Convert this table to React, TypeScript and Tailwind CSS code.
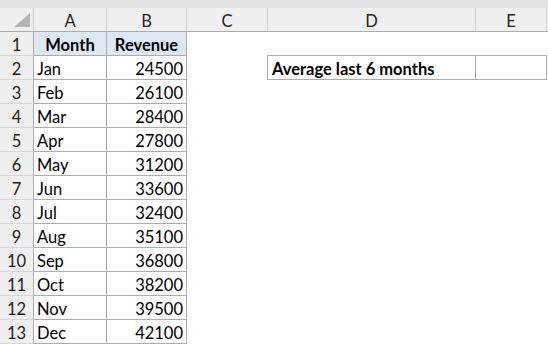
import type { ReactNode } from "react";

const data: [string, number][] = [
  ["Jan", 24500],
  ["Feb", 26100],
  ["Mar", 28400],
  ["Apr", 27800],
  ["May", 31200],
  ["Jun", 33600],
  ["Jul", 32400],
  ["Aug", 35100],
  ["Sep", 36800],
  ["Oct", 38200],
  ["Nov", 39500],
  ["Dec", 42100],
];

function RowNum({ n }: { n: number }) {
  return (
    <div className="w-[34px] h-full shrink-0 flex items-end justify-center bg-[#efefef] border-r border-b border-r-[#ababab] border-b-[#d6d6d6] text-[#222] leading-[20px]">
      {n}
    </div>
  );
}

function Cell({ w, className = "", children }: { w: string; className?: string; children?: ReactNode }) {
  return <div className={`${w} h-full flex items-end leading-[20px] shrink-0 ${className}`}>{children}</div>;
}

export default function App() {
  const heads = [
    ["A", "w-[73px]"],
    ["B", "w-[80px]"],
    ["C", "w-[81px]"],
    ["D", "w-[208px]"],
    ["E", "w-[71px]"],
  ];

  return (
    <div className="w-[548px] h-[345px] overflow-hidden bg-white text-[16.5px] text-black" style={{ fontFamily: "Lato, 'Open Sans', sans-serif" }}>
      <div className="h-[8px] bg-[#e3e3e3]" />

      {/* column headers */}
      <div className="flex h-[24px] bg-[#efefef] border-b border-[#ababab]">
        <div className="w-[34px] h-full border-r border-[#cfcfcf] relative shrink-0">
          <svg className="absolute left-[14px] top-[5px]" width="16" height="14" viewBox="0 0 16 14">
            <polygon points="16,0 16,14 0,14" fill="#b5b5b5" />
          </svg>
        </div>
        {heads.map(([l, w]) => (
          <div key={l} className={`${w} h-full shrink-0 flex items-end justify-center leading-[20px] border-r border-[#cfcfcf] text-[#222]`}>
            {l}
          </div>
        ))}
        <div className="flex-1" />
      </div>

      {/* row 1 */}
      <div className="flex h-[24px]">
        <RowNum n={1} />
        <Cell w="w-[73px]" className="justify-center font-bold bg-[#dde8f3] border-r border-b border-[#ababab]">Month</Cell>
        <Cell w="w-[80px]" className="justify-center font-bold bg-[#dde8f3] border-r border-b border-[#ababab]">Revenue</Cell>
        <Cell w="w-[80px]" />
        <Cell w="w-[209px]" className="border-b border-[#ababab]" />
        <Cell w="w-[71px]" className="border-b border-[#ababab]" />
      </div>

      {data.map(([m, v], i) => (
        <div key={m} className="flex h-[24px]">
          <RowNum n={i + 2} />
          <Cell w="w-[73px]" className="px-[3px] border-r border-b border-[#ababab]">{m}</Cell>
          <Cell w="w-[80px]" className="justify-end px-[3px] border-r border-b border-[#ababab]">{v}</Cell>
          {i === 0 ? (
            <>
              <Cell w="w-[80px]" />
              <Cell w="w-[209px]" className="px-[4px] font-bold border-l border-r border-b border-[#ababab]">
                Average last 6 months
              </Cell>
              <Cell w="w-[71px]" className="border-r border-b border-[#ababab]" />
            </>
          ) : null}
        </div>
      ))}
    </div>
  );
}
